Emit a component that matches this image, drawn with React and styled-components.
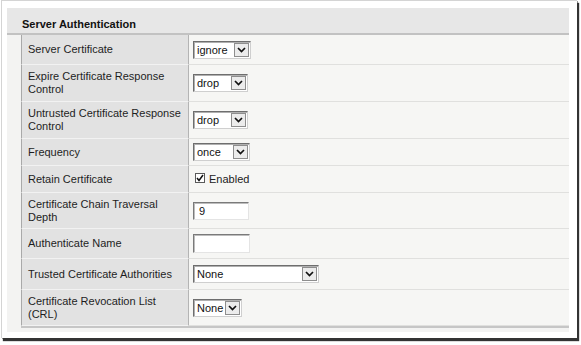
import React from "react";
import styled, { createGlobalStyle } from "styled-components";

const Global = createGlobalStyle`
  html, body { margin: 0; padding: 0; background: #ffffff; }
  body { font-family: "Liberation Sans", Arial, sans-serif; font-size: 11px; color: #222; }
`;

const Page = styled.div`
  width: 581px;
  height: 345px;
  padding-left: 1px;
  box-sizing: border-box;
  overflow: hidden;
`;

const Frame = styled.div`
  width: 576px;
  height: 338px;
  box-sizing: border-box;
  background: #ffffff;
  border-top: 1px solid #d4d4d4;
  border-left: 1px solid #d4d4d4;
  box-shadow: 2px 3px 1px #333333, 1px 1px 0 #9a9a9a;
  padding: 7px 7px 0 5px;
`;

const Panel = styled.div`
  background: #f3f3f2;
  width: 562px;
  padding-bottom: 4px;
`;

const Header = styled.div`
  background: #e7e7e7;
  border-bottom: 2px solid #c2c2c2;
  padding: 10px 0 2px 15px;
  font-weight: bold;
  font-size: 11px;
  line-height: 13px;
  color: #111;
`;

const Table = styled.div`
  margin-left: 14px;
  border-bottom: 2px solid #c6c6c6;
`;

const Row = styled.div`
  display: grid;
  grid-template-columns: 168px 1fr;
  height: ${(p) => p.h}px;
`;

const Label = styled.div`
  display: flex;
  align-items: center;
  background: #e2e2e2;
  border-left: 1px solid #a9a9a9;
  border-right: 1px solid #b4b4b4;
  border-bottom: 1px solid #f2f2f2;
  padding-left: 6px;
  line-height: 13px;
  color: #1e1e1e;
`;

const Value = styled.div`
  display: flex;
  align-items: center;
  background: #f6f6f4;
  border-bottom: 1px solid #e0e0de;
  padding-left: 4px;
`;

const SelectBox = styled.div`
  display: flex;
  align-items: center;
  width: ${(p) => p.w}px;
  height: 18px;
  box-sizing: border-box;
  background: #fff;
  border: 1px solid;
  border-color: #6e6e6e #cfcfcf #cfcfcf #6e6e6e;
  box-shadow: inset 1px 1px 0 #b0b0b0;
`;

const SelectText = styled.span`
  flex: 1;
  padding-left: 3px;
  font-size: 11px;
  color: #111;
  white-space: nowrap;
`;

const ArrowBtn = styled.span`
  display: flex;
  align-items: center;
  justify-content: center;
  width: 15px;
  height: 14px;
  box-sizing: border-box;
  margin-right: 1px;
  border: 1px solid #8e8e8e;
  background: #ececec;
`;

const Select = ({ w, value }) => (
  <SelectBox w={w}>
    <SelectText>{value}</SelectText>
    <ArrowBtn>
      <svg width="9" height="6" viewBox="0 0 9 6">
        <polyline points="1,1 4.5,4.5 8,1" fill="none" stroke="#111" strokeWidth="1.7" />
      </svg>
    </ArrowBtn>
  </SelectBox>
);

const TextInput = styled.div`
  width: ${(p) => p.w}px;
  height: ${(p) => p.hh}px;
  box-sizing: border-box;
  background: #fff;
  border: 1px solid;
  border-color: #7a7a7a #e4e4e4 #e4e4e4 #7a7a7a;
  box-shadow: inset 1px 1px 0 #bdbdbd;
  padding-left: 5px;
  display: flex;
  align-items: center;
  font-size: 11px;
  color: #111;
`;

const CheckWrap = styled.label`
  display: flex;
  align-items: center;
  gap: 4px;
  padding-left: 2px;
  font-size: 11px;
  color: #222;
`;

const CheckBox = styled.span`
  width: 10px;
  height: 10px;
  box-sizing: border-box;
  border: 1px solid #5a5a5a;
  background: #fff;
  display: flex;
  align-items: center;
  justify-content: center;
  margin-top: -3px;
`;

export default function App() {
  return (
    <Page>
      <Global />
      <Frame>
        <Panel>
          <Header>Server Authentication</Header>
          <Table>
            <Row h={30}>
              <Label>Server Certificate</Label>
              <Value><Select w={58} value="ignore" /></Value>
            </Row>
            <Row h={37}>
              <Label>Expire Certificate Response<br />Control</Label>
              <Value><Select w={55} value="drop" /></Value>
            </Row>
            <Row h={37}>
              <Label>Untrusted Certificate Response<br />Control</Label>
              <Value><Select w={55} value="drop" /></Value>
            </Row>
            <Row h={27}>
              <Label>Frequency</Label>
              <Value><Select w={57} value="once" /></Value>
            </Row>
            <Row h={27}>
              <Label>Retain Certificate</Label>
              <Value>
                <CheckWrap>
                  <CheckBox>
                    <svg width="8" height="8" viewBox="0 0 8 8">
                      <polyline points="1,4 3,6.5 7,1" fill="none" stroke="#111" strokeWidth="1.5" />
                    </svg>
                  </CheckBox>
                  Enabled
                </CheckWrap>
              </Value>
            </Row>
            <Row h={36}>
              <Label>Certificate Chain Traversal<br />Depth</Label>
              <Value><TextInput w={56} hh={18}>9</TextInput></Value>
            </Row>
            <Row h={30}>
              <Label>Authenticate Name</Label>
              <Value><TextInput w={57} hh={19} /></Value>
            </Row>
            <Row h={31}>
              <Label>Trusted Certificate Authorities</Label>
              <Value><Select w={126} value="None" /></Value>
            </Row>
            <Row h={36}>
              <Label>Certificate Revocation List<br />(CRL)</Label>
              <Value><Select w={49} value="None" /></Value>
            </Row>
          </Table>
        </Panel>
      </Frame>
    </Page>
  );
}
